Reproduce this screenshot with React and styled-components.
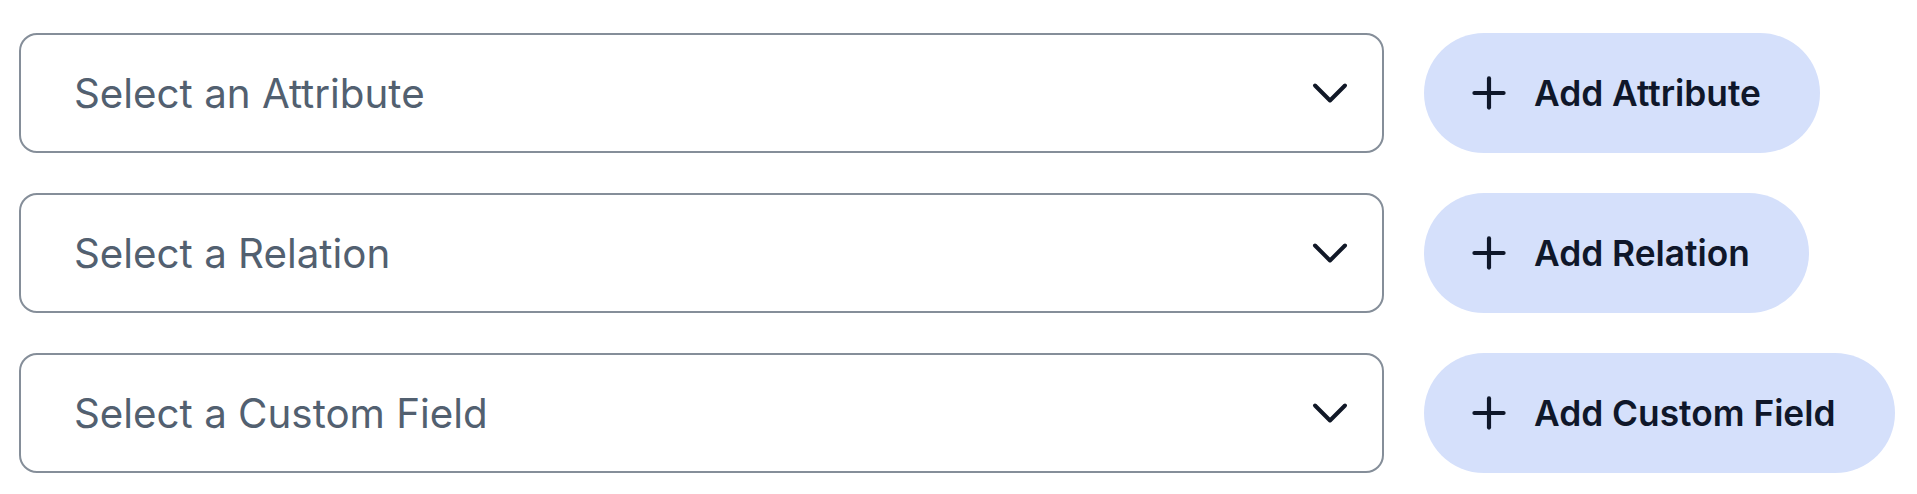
import React from 'react';
import styled, { createGlobalStyle } from 'styled-components';
import { ChevronDown, Plus } from 'lucide-react';

const GlobalStyle = createGlobalStyle`
  body {
    margin: 0;
    background: #ffffff;
    font-family: Inter, "Noto Sans", sans-serif;
  }
`;

const rows = [
  { placeholder: 'Select an Attribute', action: 'Add Attribute' },
  { placeholder: 'Select a Relation', action: 'Add Relation' },
  { placeholder: 'Select a Custom Field', action: 'Add Custom Field' },
];

const App = () => {
  return (
    <>
      <GlobalStyle />
      <Container>
        {rows.map((row) => (
          <Row key={row.action}>
            <SelectBox>
              <Placeholder>{row.placeholder}</Placeholder>
              <ChevronDown size={60} strokeWidth={1.6} color="#111827" />
            </SelectBox>
            <AddButton type="button">
              <Plus size={50} strokeWidth={2} color="#0f172a" />
              {row.action}
            </AddButton>
          </Row>
        ))}
      </Container>
    </>
  );
};

const Container = styled('div')`
  display: flex;
  flex-direction: column;
  gap: 40px;
  padding: 33px 0 0 19px;
`;

const Row = styled('div')`
  display: flex;
  align-items: center;
  gap: 40px;
`;

const SelectBox = styled('div')`
  display: flex;
  align-items: center;
  justify-content: space-between;
  box-sizing: border-box;
  width: 1365px;
  height: 120px;
  padding: 0 22px 0 53px;
  border: 2px solid #858e99;
  border-radius: 18px;
  background: #ffffff;
`;

const Placeholder = styled('span')`
  font-size: 40.3px;
  font-weight: 400;
  color: #526070;
`;

const AddButton = styled('button')`
  display: flex;
  align-items: center;
  gap: 20px;
  box-sizing: border-box;
  height: 120px;
  padding: 0 59px 0 40px;
  border: none;
  border-radius: 60px;
  background: #d5e0fb;
  font-family: Inter, "Noto Sans", sans-serif;
  font-size: 35.3px;
  font-weight: 600;
  color: #0f172a;
  cursor: pointer;
`;

export default App;
